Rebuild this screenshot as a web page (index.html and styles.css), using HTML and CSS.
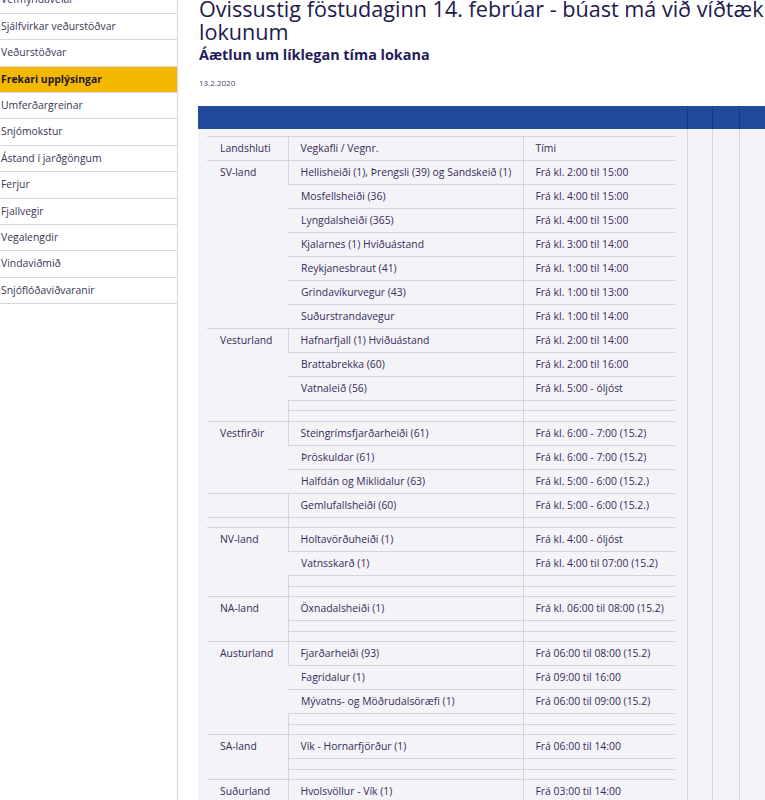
FILE: index.html
```html
<!DOCTYPE html>
<html lang="is">
<head>
<meta charset="UTF-8">
<meta name="viewport" content="width=device-width, initial-scale=1.0">
<title>Óvissustig föstudaginn 14. febrúar</title>
<link rel="stylesheet" href="styles.css">
</head>
<body>
    <div class="page">
        <ul class="sidebar">
            <li>Vefmyndavélar</li>
            <li>Sjálfvirkar veðurstöðvar</li>
            <li>Veðurstöðvar</li>
            <li class="active">Frekari upplýsingar</li>
            <li>Umferðargreinar</li>
            <li>Snjómokstur</li>
            <li>Ástand í jarðgöngum</li>
            <li>Ferjur</li>
            <li>Fjallvegir</li>
            <li>Vegalengdir</li>
            <li>Vindaviðmið</li>
            <li>Snjóflóðaviðvaranir</li>
        </ul>

        <div class="main">
            <h1>Óvissustig föstudaginn 14. febrúar - búast má við víðtækum lokunum</h1>
            <h2>Áætlun um líklegan tíma lokana</h2>
            <p class="date">13.2.2020</p>

            <table class="outer">
                <colgroup>
                    <col class="c-main">
                    <col class="c-a">
                    <col class="c-b">
                    <col class="c-c">
                </colgroup>
                <thead>
                    <tr>
                        <th></th>
                        <th></th>
                        <th></th>
                        <th></th>
                    </tr>
                </thead>
                <tbody>
                    <tr>
                        <td class="holder">
                            <table class="closures">
                                <colgroup>
                                    <col class="c-area">
                                    <col class="c-road">
                                    <col class="c-time">
                                </colgroup>
                                <tr>
                                    <td>Landshluti</td>
                                    <td>Vegkafli / Vegnr.</td>
                                    <td>Tími</td>
                                </tr>

                                <tr>
                                    <td rowspan="7" class="area">SV-land</td>
                                    <td>Hellisheiði (1), Þrengsli (39) og Sandskeið (1)</td>
                                    <td>Frá kl. 2:00 til 15:00</td>
                                </tr>
                                <tr><td>Mosfellsheiði (36)</td><td>Frá kl. 4:00 til 15:00</td></tr>
                                <tr><td>Lyngdalsheiði (365)</td><td>Frá kl. 4:00 til 15:00</td></tr>
                                <tr><td>Kjalarnes (1) Hviðuástand</td><td>Frá kl. 3:00 til 14:00</td></tr>
                                <tr><td>Reykjanesbraut (41)</td><td>Frá kl. 1:00 til 14:00</td></tr>
                                <tr><td>Grindavíkurvegur (43)</td><td>Frá kl. 1:00 til 13:00</td></tr>
                                <tr><td>Suðurstrandavegur</td><td>Frá kl. 1:00 til 14:00</td></tr>

                                <tr>
                                    <td rowspan="5" class="area">Vesturland</td>
                                    <td>Hafnarfjall (1) Hviðuástand</td>
                                    <td>Frá kl. 2:00 til 14:00</td>
                                </tr>
                                <tr><td>Brattabrekka (60)</td><td>Frá kl. 2:00 til 16:00</td></tr>
                                <tr><td>Vatnaleið (56)</td><td>Frá kl. 5:00 - óljóst</td></tr>
                                <tr class="blank"><td></td><td></td></tr>
                                <tr class="blank"><td></td><td></td></tr>

                                <tr>
                                    <td rowspan="3" class="area">Vestfirðir</td>
                                    <td>Steingrímsfjarðarheiði (61)</td>
                                    <td>Frá kl. 6:00 - 7:00 (15.2)</td>
                                </tr>
                                <tr><td>Þröskuldar (61)</td><td>Frá kl. 6:00 - 7:00 (15.2)</td></tr>
                                <tr><td>Halfdán og Miklidalur (63)</td><td>Frá kl. 5:00 - 6:00 (15.2.)</td></tr>
                                <tr><td></td><td>Gemlufallsheiði (60)</td><td>Frá kl. 5:00 - 6:00 (15.2.)</td></tr>
                                <tr class="blank"><td></td><td></td><td></td></tr>

                                <tr>
                                    <td rowspan="4" class="area">NV-land</td>
                                    <td>Holtavörðuheiði (1)</td>
                                    <td>Frá kl. 4:00 - óljóst</td>
                                </tr>
                                <tr><td>Vatnsskarð (1)</td><td>Frá kl. 4:00 til 07:00 (15.2)</td></tr>
                                <tr class="blank"><td></td><td></td></tr>
                                <tr class="blank"><td></td><td></td></tr>

                                <tr>
                                    <td rowspan="3" class="area">NA-land</td>
                                    <td>Öxnadalsheiði (1)</td>
                                    <td>Frá kl. 06:00 til 08:00 (15.2)</td>
                                </tr>
                                <tr class="blank"><td></td><td></td></tr>
                                <tr class="blank"><td></td><td></td></tr>

                                <tr>
                                    <td rowspan="5" class="area">Austurland</td>
                                    <td>Fjarðarheiði (93)</td>
                                    <td>Frá 06:00 til 08:00 (15.2)</td>
                                </tr>
                                <tr><td>Fagridalur (1)</td><td>Frá 09:00 til 16:00</td></tr>
                                <tr><td>Mývatns- og Möðrudalsöræfi (1)</td><td>Frá 06:00 til 09:00 (15.2)</td></tr>
                                <tr class="blank"><td></td><td></td></tr>
                                <tr class="blank"><td></td><td></td></tr>

                                <tr>
                                    <td rowspan="3" class="area">SA-land</td>
                                    <td>Vík - Hornarfjörður (1)</td>
                                    <td>Frá 06:00 til 14:00</td>
                                </tr>
                                <tr class="blank"><td></td><td></td></tr>
                                <tr class="blank"><td></td><td></td></tr>

                                <tr>
                                    <td rowspan="3" class="area">Suðurland</td>
                                    <td>Hvolsvöllur - Vík (1)</td>
                                    <td>Frá 03:00 til 14:00</td>
                                </tr>
                                <tr class="blank"><td></td><td></td></tr>
                                <tr class="blank"><td></td><td></td></tr>
                            </table>
                        </td>
                        <td></td>
                        <td></td>
                        <td></td>
                    </tr>
                </tbody>
            </table>
        </div>
    </div>
</body>
</html>
```

FILE: styles.css
```css
html, body {
    overflow: hidden;
}

body {
    font-family: "Open Sans", Arial, sans-serif;
    background-color: #fff;
    color: #372b5b;
    margin: 0;
    padding: 0;
}

.page {
    display: flex;
    align-items: flex-start;
    min-height: 820px;
}

/* left menu */
.sidebar {
    list-style: none;
    margin: -12.6px 0 0 0;
    padding: 0;
    width: 177px;
    flex-shrink: 0;
    border-right: 1px solid #d8d5df;
    min-height: 840px;
    align-self: stretch;
}

.sidebar li {
    font-size: 10.4px;
    line-height: 25.4px;
    padding-left: 1px;
    color: #3b3553;
    border-bottom: 1px solid #d8d5df;
    white-space: nowrap;
}

.sidebar li.active {
    background-color: #f5b800;
    color: #1d1a2e;
    font-weight: 700;
}

/* content */
.main {
    width: 700px;
    flex-shrink: 0;
    margin-left: 21px;
}

.main h1 {
    width: 650px;
    font-size: 21.6px;
    font-weight: 400;
    line-height: 23.6px;
    color: #1d1b4c;
    margin: -3.4px 0 0 0;
}

.main h2 {
    font-size: 14.4px;
    font-weight: 700;
    line-height: 18px;
    color: #1f1c5c;
    margin: 2px 0 0 0;
}

.date {
    font-size: 8px;
    line-height: 12px;
    color: #4a4560;
    margin: 13px 0 0 0;
}

.outer {
    width: 620px;
    margin-top: 17px;
    margin-left: -1px;
    border-collapse: collapse;
    table-layout: fixed;
    background-color: #f4f3f7;
}

.outer .c-main { width: 489px; }
.outer .c-a { width: 25px; }
.outer .c-b { width: 27px; }
.outer .c-c { width: 79px; }

.outer th {
    background-color: #1f4b9a;
    height: 23px;
    padding: 0;
    border-left: 1px solid #153a7a;
}

.outer th:first-child {
    border-left: none;
}

.outer td {
    padding: 0;
    vertical-align: top;
    border-left: 1px solid #d6d3de;
}

.outer td.holder {
    border-left: none;
    padding: 7px 12px 0 9px;
}

/* closures table */
.closures {
    width: 468px;
    border-collapse: collapse;
    table-layout: fixed;
    border-top: 1px solid #d6d3de;
}

.closures .c-area { width: 81px; }
.closures .c-road { width: 235px; }
.closures .c-time { width: 152px; }

.closures td {
    font-size: 10.4px;
    line-height: 23px;
    height: 23px;
    padding: 0 0 0 12px;
    color: #372b5b;
    border-left: 1px solid #d6d3de;
    border-bottom: 1px solid #d6d3de;
    vertical-align: top;
    white-space: nowrap;
}

.closures tr td:first-child {
    border-left: none;
    padding-left: 13px;
}

.closures tr.blank td {
    height: 9.5px;
    line-height: 9px;
}

.closures tr.blank td:first-child {
    border-left: 1px solid #d6d3de;
    padding-left: 12px;
}

.closures tr.blank td:first-child:nth-last-child(3) {
    border-left: none;
}
```
